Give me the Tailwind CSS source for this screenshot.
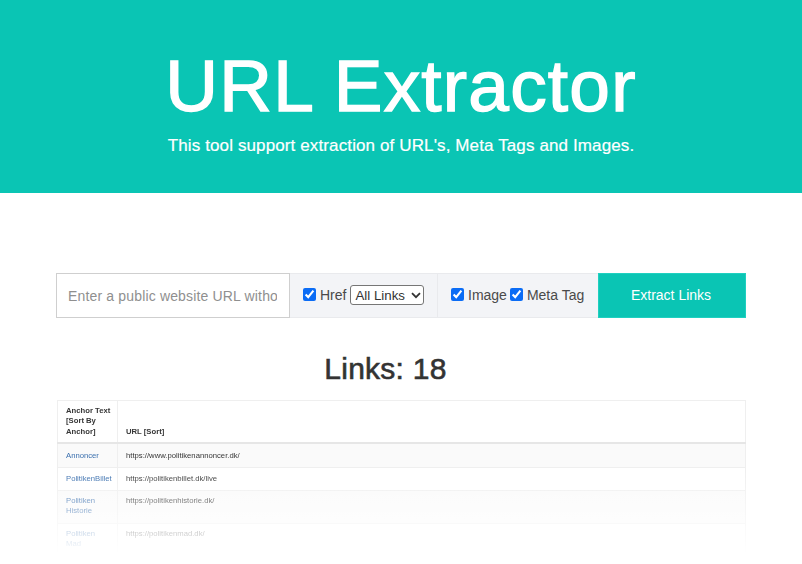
<!DOCTYPE html>
<html><head><meta charset="utf-8"><script src="https://cdn.jsdelivr.net/npm/@tailwindcss/browser@4"></script></head>
<body class="bg-white overflow-hidden font-['Liberation_Sans',Arial,sans-serif]">
<div class="w-[802px] h-[564px] overflow-hidden relative">
<header class="h-[193px] bg-[#0ac5b4] text-white text-center flex flex-col items-center pt-[46px]">
  <h1 class="text-[73px] leading-[80px] font-normal tracking-[1.2px] [-webkit-text-stroke:1.4px_#fff]">URL Extractor</h1>
  <p class="text-[17px] leading-[24px] mt-[8px] tracking-[0.12px] [-webkit-text-stroke:0.2px_#fff]">This tool support extraction of URL's, Meta Tags and Images.</p>
</header>
<form class="flex h-[45px] mt-[80px] ml-[56px] w-[690px] text-[14px] text-[#4a4a4a]">
  <input type="text" placeholder="Enter a public website URL without http" class="w-[234px] h-full border border-[#cfcfcf] bg-white pl-[11px] pr-[12px] text-[14px] tracking-[0.16px] placeholder:text-[#8f8f8f] outline-none">
  <div class="flex items-center w-[148px] bg-[#f3f4f7] border-y border-r border-[#e9eaed] pl-[13px] gap-[4px]">
    <input type="checkbox" checked class="w-[13px] h-[13px] accent-[#0b6cf5] m-0 -mt-[3px]">
    <span class="-mt-[1px]">Href</span>
    <span class="relative flex -mt-[1px]">
      <select class="appearance-none border border-[#767676] rounded-[3px] text-[13.3px] h-[20px] w-[74px] bg-white text-[#333] pl-[4px]"><option>All Links</option></select>
      <svg class="absolute right-[3px] top-[7px] w-[10px] h-[7px]" viewBox="0 0 10 7" fill="none"><path d="M1 1.2 L5 5.2 L9 1.2" stroke="#333" stroke-width="1.8"/></svg>
    </span>
  </div>
  <div class="flex items-center w-[160px] bg-[#f3f4f7] border-y border-[#e9eaed] pl-[13px] gap-[4px]">
    <input type="checkbox" checked class="w-[13px] h-[13px] accent-[#0b6cf5] m-0 -mt-[3px]">
    <span class="mr-[-1px]">Image</span>
    <input type="checkbox" checked class="w-[13px] h-[13px] accent-[#0b6cf5] m-0 -mt-[3px]">
    <span>Meta Tag</span>
  </div>
  <button type="button" class="w-[148px] h-full bg-[#0ac5b4] text-white text-[14px] border border-[#1fd0c0] pr-[2px]">Extract Links</button>
</form>
<h2 class="text-center text-[30px] leading-[36px] font-normal text-[#333] mt-[33px] pr-[31px] tracking-[0.25px] [-webkit-text-stroke:0.6px_#333]">Links: 18</h2>
<div class="relative ml-[57px] w-[689px] mt-[13px] blur-[0.4px]">
  <table class="w-full table-fixed border-collapse text-[7.7px] leading-[10.4px] text-[#363636] border border-[#efefef]">
    <thead>
      <tr class="border-b-2 border-[#e6e6e6] align-bottom">
        <th class="w-[60px] text-left font-bold pl-[8px] pr-0 py-[5px] border-r border-[#efefef] whitespace-nowrap">Anchor Text<br>[Sort By<br>Anchor]</th>
        <th class="text-left font-bold px-[8px] py-[5px]">URL [Sort]</th>
      </tr>
    </thead>
    <tbody class="align-top">
      <tr class="bg-[#fafafa] border-b border-[#efefef] h-[23px]">
        <td class="px-[8px] pt-[7px] pb-[5px] text-[#3a6fae] border-r border-[#efefef]">Annoncer</td>
        <td class="px-[8px] pt-[7px] pb-[5px]">https://www.politikenannoncer.dk/</td>
      </tr>
      <tr class="border-b border-[#efefef] h-[23px]">
        <td class="px-[8px] py-[6px] text-[#3a6fae] border-r border-[#efefef]">PolitikenBillet</td>
        <td class="px-[8px] py-[6px]">https://politikenbillet.dk/live</td>
      </tr>
      <tr class="bg-[#fafafa] border-b border-[#efefef] h-[33px]">
        <td class="px-[8px] py-[5px] text-[#3a6fae] border-r border-[#efefef]">Politiken Historie</td>
        <td class="px-[8px] py-[5px]">https://politikenhistorie.dk/</td>
      </tr>
      <tr class="h-[33px]">
        <td class="px-[8px] py-[5px] text-[#3a6fae] border-r border-[#efefef]">Politiken Mad</td>
        <td class="px-[8px] py-[5px]">https://politikenmad.dk/</td>
      </tr>
    </tbody>
  </table>
</div>
<div class="absolute left-0 right-0 top-[470px] h-[84px] bg-gradient-to-b from-white/0 to-white"></div>
<div class="absolute left-0 right-0 top-[554px] h-[10px] bg-white"></div>
</div>
</body></html>
